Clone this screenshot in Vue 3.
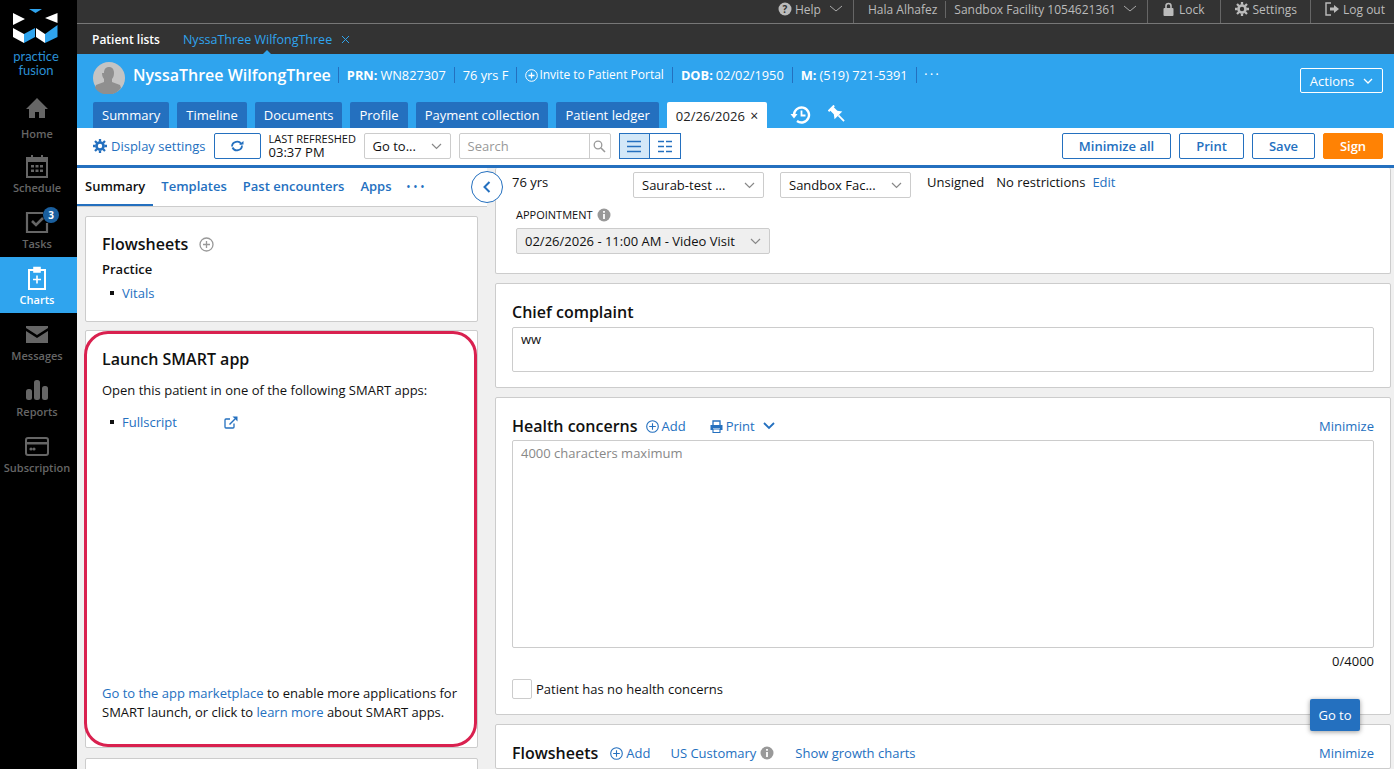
<template>
  <div class="app">
    <aside class="rail">
      <div class="logo">
        <svg width="46" height="35" viewBox="0 0 46 35">
          <path d="M16 0h13l-6.500 4z" fill="#2fa4ee" />
          <path d="M0 4l12 6-12 6zM32 9l12.500-5v10zM0 19l11 6v9L0 28zM23 19l9 6v9l-9-6z" fill="#fff" />
          <path d="M11 25l11-6v9l-11 6zM32 25l12.500-9v12L32 34z" fill="#2fa4ee" />
        </svg>
        <div class="logo-text">practice<br />fusion</div>
      </div>
      <a v-for="item in railItems" :key="item.label" class="rail-item" :class="{ active: item.active, first: item.label === 'Home' }">
        <svg class="rail-icon" viewBox="0 0 24 24" width="24" height="24" v-html="item.icon"></svg>
        <span v-if="item.badge" class="badge">{{ item.badge }}</span>
        <span>{{ item.label }}</span>
      </a>
    </aside>

    <div class="main">
      <div class="topbar">
        <div class="top-item help">
          <svg width="14" height="14" viewBox="0 0 14 14"><circle cx="7" cy="7" r="6.500" fill="#bbb" /><text x="7" y="10.500" text-anchor="middle" font-size="10" font-weight="700" fill="#333">?</text></svg>
          <span>Help</span>
          <svg class="chev" width="14" height="8" viewBox="0 0 14 8"><path d="M1 1l6 5 6-5" fill="none" stroke="#aaa" /></svg>
        </div>
        <div class="top-item user">
          <span class="user-name">Hala Alhafez</span>
          <span>Sandbox Facility 1054621361</span>
          <svg class="chev" width="14" height="8" viewBox="0 0 14 8"><path d="M1 1l6 5 6-5" fill="none" stroke="#aaa" /></svg>
        </div>
        <div class="top-item lock">
          <svg width="11" height="14" viewBox="0 0 11 14"><path d="M3 6V4a2.500 2.500 0 0 1 5 0v2" fill="none" stroke="#bbb" stroke-width="1.600" /><rect x="0.500" y="6" width="10" height="8" rx="1" fill="#bbb" /></svg>
          <span>Lock</span>
        </div>
        <div class="top-item settings">
          <svg width="14" height="14" viewBox="0 0 16 16"><circle cx="8" cy="8" r="4" fill="none" stroke="#bbb" stroke-width="3" /><path d="M8 0v3M8 13v3M0 8h3M13 8h3M2.300 2.300l2.200 2.200M11.500 11.500l2.200 2.200M2.300 13.700l2.200-2.200M11.500 4.500l2.200-2.200" stroke="#bbb" stroke-width="2.600" /></svg>
          <span>Settings</span>
        </div>
        <div class="top-item logout">
          <svg width="14" height="14" viewBox="0 0 14 14"><path d="M6 1H1v12h5" fill="none" stroke="#bbb" stroke-width="1.400" /><path d="M5 5.500h4V3l5 4-5 4V8.500H5z" fill="#bbb" /></svg>
          <span>Log out</span>
        </div>
      </div>

      <div class="tabsbar">
        <span class="lists">Patient lists</span>
        <span class="open-patient">NyssaThree WilfongThree</span>
        <svg class="tab-x" width="9" height="9" viewBox="0 0 9 9"><path d="M1 1l7 7M8 1L1 8" stroke="#2fa4ee" /></svg>
        <span class="notch"></span>
      </div>

      <header class="patient">
        <div class="patient-row">
          <svg class="avatar" width="32" height="32" viewBox="0 0 32 32">
            <circle cx="16" cy="16" r="16" fill="#c4c4c4" />
            <path d="M11 11c0-4 2-6 5-6s5 2 5 6c0 3-1 5-2 6v3l8 3 1 3a16 16 0 0 1-26 0l1-3 8-3v-3c-1-1-2-3-2-6z" fill="#8f8f8f" />
          </svg>
          <h1 class="patient-name">NyssaThree WilfongThree</h1>
          <div class="facts">
            <span class="fact"><b>PRN:</b> WN827307</span>
            <span class="fact">76 yrs F</span>
            <span class="fact invite">
              <svg width="13" height="13" viewBox="0 0 13 13"><circle cx="6.500" cy="6.500" r="5.800" fill="none" stroke="#fff" /><path d="M6.500 3.500v6M3.500 6.500h6" stroke="#fff" stroke-width="1.300" /></svg>
              Invite to Patient Portal
            </span>
            <span class="fact"><b>DOB:</b> 02/02/1950</span>
            <span class="fact"><b>M:</b> (519) 721-5391</span>
            <span class="fact dots">•••</span>
          </div>
          <button class="actions">
            Actions
            <svg width="10" height="6" viewBox="0 0 10 6"><path d="M1 1l4 4 4-4" fill="none" stroke="#fff" stroke-width="1.300" /></svg>
          </button>
        </div>
        <nav class="chart-tabs">
          <a v-for="t in chartTabs" :key="t" class="chart-tab">{{ t }}</a>
          <a class="chart-tab current">02/26/2026 <span class="close">×</span></a>
          <svg class="history" width="21" height="20" viewBox="0 0 21 20">
            <path d="M4 10a7.500 7.500 0 1 1 3 6" fill="none" stroke="#fff" stroke-width="2.400" />
            <path d="M0.500 9h7L4 13.500z" fill="#fff" />
            <path d="M11.500 5.500V10.500H15.500" fill="none" stroke="#fff" stroke-width="1.800" />
          </svg>
          <svg class="pin" width="18" height="18" viewBox="0 0 18 18">
            <g transform="rotate(-45 9 9)">
              <path d="M5 0h8v2h-1.500v5l3 4H3.500l3-4V2H5z" fill="#fff" />
              <path d="M9 11v8" stroke="#fff" stroke-width="1.800" />
            </g>
          </svg>
        </nav>
      </header>

      <div class="toolbar">
        <a class="display">
          <svg width="14" height="14" viewBox="0 0 16 16"><circle cx="8" cy="8" r="4" fill="none" stroke="#2470bf" stroke-width="3" /><path d="M8 0v3M8 13v3M0 8h3M13 8h3M2.300 2.300l2.200 2.200M11.500 11.500l2.200 2.200M2.300 13.700l2.200-2.200M11.500 4.500l2.200-2.200" stroke="#2470bf" stroke-width="2.600" /></svg>
          Display settings
        </a>
        <button class="refresh">
          <svg width="14" height="12" viewBox="0 0 14 12"><path d="M2 6.500A5 5 0 0 1 11.500 4.500M12 5.500A5 5 0 0 1 2.500 7.500" fill="none" stroke="#2470bf" stroke-width="1.800" /><path d="M9 4.500h4.500V1z" fill="#2470bf" /></svg>
        </button>
        <div class="refreshed"><span class="r1">LAST REFRESHED</span><span class="r2">03:37 PM</span></div>
        <div class="select goto">
          <span>Go to...</span>
          <svg width="11" height="7" viewBox="0 0 11 7"><path d="M1 1l4.500 4.500L10 1" fill="none" stroke="#888" stroke-width="1.200" /></svg>
        </div>
        <div class="search">
          <span class="search-ph">Search</span>
          <span class="search-btn">
            <svg width="13" height="13" viewBox="0 0 13 13"><circle cx="5" cy="5" r="3.800" fill="none" stroke="#999" stroke-width="1.300" /><path d="M8 8l4 4" stroke="#999" stroke-width="1.600" /></svg>
          </span>
        </div>
        <div class="viewtoggle">
          <span class="vt on"><svg width="14" height="13" viewBox="0 0 14 13"><path d="M0 1.500h14M0 6.500h14M0 11.500h14" stroke="#2470bf" stroke-width="1.600" /></svg></span>
          <span class="vt"><svg width="14" height="13" viewBox="0 0 14 13"><path d="M0 1.500h6M8 1.500h6M0 6.500h6M8 6.500h6M0 11.500h6M8 11.500h6" stroke="#2470bf" stroke-width="1.600" /></svg></span>
        </div>
        <div class="tool-right">
          <button class="tbtn w-min">Minimize all</button>
          <button class="tbtn w-print">Print</button>
          <button class="tbtn w-save">Save</button>
          <button class="tbtn sign">Sign</button>
        </div>
      </div>

      <div class="body">
        <section class="left">
          <nav class="subtabs">
            <a class="subtab selected">Summary</a>
            <a class="subtab">Templates</a>
            <a class="subtab">Past encounters</a>
            <a class="subtab">Apps</a>
            <a class="subtab more">•••</a>
          </nav>
          <div class="left-scroll">
            <div class="card flow-card">
              <h2 class="card-title">Flowsheets
                <svg width="15" height="15" viewBox="0 0 15 15"><circle cx="7.500" cy="7.500" r="6.500" fill="none" stroke="#999" stroke-width="1.300" /><path d="M7.500 4v7M4 7.500h7" stroke="#999" stroke-width="1.300" /></svg>
              </h2>
              <div class="practice">Practice</div>
              <ul class="links"><li><a>Vitals</a></li></ul>
            </div>
            <div class="card smart-card">
              <h2 class="card-title">Launch SMART app</h2>
              <p class="smart-line">Open this patient in one of the following SMART apps:</p>
              <ul class="links smart-links">
                <li>
                  <a>Fullscript</a>
                  <svg class="ext" width="14" height="13" viewBox="0 0 14 13"><path d="M10 7.500V11a1 1 0 0 1-1 1H2a1 1 0 0 1-1-1V4a1 1 0 0 1 1-1h4" fill="none" stroke="#2470bf" stroke-width="1.300" /><path d="M5.500 8.500L11 3" stroke="#2470bf" stroke-width="1.500" /><path d="M8.500 0.500H13.500V5.500z" fill="#2470bf" /></svg>
                </li>
              </ul>
              <p class="smart-foot"><a>Go to the app marketplace</a> to enable more applications for SMART launch, or click to <a>learn more</a> about SMART apps.</p>
            </div>
            <div class="card stub"></div>
          </div>
        </section>

        <button class="collapse">
          <svg width="8" height="12" viewBox="0 0 8 12"><path d="M6.500 1L1.500 6l5 5" fill="none" stroke="#2470bf" stroke-width="2" /></svg>
        </button>

        <section class="right">
          <div class="card enc-card">
            <div class="enc-row">
              <span class="enc-age">76 yrs</span>
              <div class="select prov"><span>Saurab-test ...</span><svg width="11" height="7" viewBox="0 0 11 7"><path d="M1 1l4.500 4.500L10 1" fill="none" stroke="#888" stroke-width="1.200" /></svg></div>
              <div class="select fac"><span>Sandbox Fac...</span><svg width="11" height="7" viewBox="0 0 11 7"><path d="M1 1l4.500 4.500L10 1" fill="none" stroke="#888" stroke-width="1.200" /></svg></div>
              <span class="unsigned">Unsigned</span>
              <span class="restrict">No restrictions</span>
              <a class="edit">Edit</a>
            </div>
            <div class="appt-label">APPOINTMENT
              <svg width="14" height="14" viewBox="0 0 14 14"><circle cx="7" cy="7" r="6.500" fill="#999" /><path d="M7 6v5M7 3v1.800" stroke="#fff" stroke-width="1.800" /></svg>
            </div>
            <div class="select appt"><span>02/26/2026 - 11:00 AM - Video Visit</span><svg width="11" height="7" viewBox="0 0 11 7"><path d="M1 1l4.500 4.500L10 1" fill="none" stroke="#888" stroke-width="1.200" /></svg></div>
          </div>

          <div class="card chief">
            <h2 class="sec-title">Chief complaint</h2>
            <div class="chief-box">ww</div>
          </div>

          <div class="card health">
            <div class="sec-head">
              <h2 class="sec-title">Health concerns</h2>
              <a class="add">
                <svg width="13" height="13" viewBox="0 0 13 13"><circle cx="6.500" cy="6.500" r="5.800" fill="none" stroke="#2470bf" stroke-width="1.100" /><path d="M6.500 3.200v6.600M3.200 6.500h6.600" stroke="#2470bf" stroke-width="1.100" /></svg>
                Add
              </a>
              <a class="print">
                <svg width="13" height="13" viewBox="0 0 13 13"><path d="M3 5V1h7v4" fill="none" stroke="#2470bf" stroke-width="1.300" /><path d="M0.500 5h12v5H10V8H3v2H0.500z" fill="#2470bf" /><path d="M3 9h7v3.500H3z" fill="none" stroke="#2470bf" stroke-width="1.100" /></svg>
                Print
                <svg class="print-chev" width="12" height="8" viewBox="0 0 12 8"><path d="M1 1l5 5 5-5" fill="none" stroke="#2470bf" stroke-width="1.800" /></svg>
              </a>
              <a class="minimize">Minimize</a>
            </div>
            <div class="health-box">4000 characters maximum</div>
            <div class="count">0/4000</div>
            <label class="check"><span class="box"></span>Patient has no health concerns</label>
          </div>

          <div class="card flow2">
            <div class="sec-head">
              <h2 class="sec-title">Flowsheets</h2>
              <a class="add flow-add">
                <svg width="13" height="13" viewBox="0 0 13 13"><circle cx="6.500" cy="6.500" r="5.800" fill="none" stroke="#2470bf" stroke-width="1.100" /><path d="M6.500 3.200v6.600M3.200 6.500h6.600" stroke="#2470bf" stroke-width="1.100" /></svg>
                Add
              </a>
              <a class="units">US Customary
                <svg width="14" height="14" viewBox="0 0 14 14"><circle cx="7" cy="7" r="6.500" fill="#999" /><path d="M7 6v5M7 3v1.800" stroke="#fff" stroke-width="1.800" /></svg>
              </a>
              <a class="growth">Show growth charts</a>
              <a class="minimize">Minimize</a>
            </div>
          </div>
        </section>
      </div>

      <button class="goto-float">Go to</button>
    </div>
  </div>
</template>

<script setup>
const railItems = [
  { label: 'Home', icon: '<path d="M12 1L1 12h3v9h6v-6h4v6h6v-9h3z" fill="#666"/>' },
  { label: 'Schedule', icon: '<path d="M2 4h20v19H2z" fill="none" stroke="#666" stroke-width="2"/><path d="M2 4h20v4H2zM6 1h2v5H6zM16 1h2v5h-2zM6 11h3v2.500H6zM10.500 11h3v2.500h-3zM15 11h3v2.500h-3zM6 15.500h3V18H6zM10.500 15.500h3V18h-3zM15 15.500h3V18h-3z" fill="#666"/>' },
  { label: 'Tasks', badge: 3, icon: '<path d="M22 13v9H2V3h16" fill="none" stroke="#666" stroke-width="2.200"/><path d="M7 11l4 4 7-7" fill="none" stroke="#666" stroke-width="2.600"/>' },
  { label: 'Charts', active: true, icon: '<path d="M4 4h16v19H4z" fill="none" stroke="#fff" stroke-width="2"/><path d="M9 1.500h6V6H9zM12 9.500v8M8 13.500h8" fill="#fff" stroke="#fff" stroke-width="1.600"/>' },
  { label: 'Messages', icon: '<path d="M1 4h22v2L12 13 1 6zM1 9l11 7 11-7v12H1z" fill="#666"/>' },
  { label: 'Reports', icon: '<rect x="1" y="11" width="6" height="11" rx="2.500" fill="#666"/><rect x="9" y="2" width="6" height="20" rx="2.500" fill="#666"/><rect x="17" y="8" width="6" height="14" rx="2.500" fill="#666"/>' },
  { label: 'Subscription', icon: '<rect x="1" y="4" width="22" height="17" rx="2" fill="none" stroke="#666" stroke-width="2"/><path d="M1 8h22v2.500H1z" fill="#666"/><circle cx="6" cy="15" r="1.600" fill="#666"/><circle cx="9" cy="15" r="1.600" fill="#666"/>' }
]

const chartTabs = ['Summary', 'Timeline', 'Documents', 'Profile', 'Payment collection', 'Patient ledger']
</script>

<style>
html, body { margin: 0; height: 100%; overflow: hidden; }
</style>

<style scoped>
.app {
  display: flex;
  height: 769px;
  overflow: hidden;
  font-family: "Open Sans", "Liberation Sans", sans-serif;
  font-size: 13px;
  color: #111;
  background: #f0f0f0;
}
a { color: #2470bf; text-decoration: none; }
button { font-family: inherit; cursor: pointer; }
h1, h2, p, ul { margin: 0; padding: 0; }

.rail {
  width: 77px;
  flex: none;
  background: #000;
  display: flex;
  flex-direction: column;
}
.logo {
  height: 91px;
  padding: 9px 0 0 13px;
  box-sizing: border-box;
  display: flex;
  flex-direction: column;
  width: 59px;
}
.logo svg { display: block; }
.logo-text {
  color: #2a8fd4;
  font-family: Lato, "Open Sans", sans-serif;
  font-size: 13px;
  line-height: 13.500px;
  text-align: center;
  margin-top: 6px;
}
.rail-item {
  position: relative;
  height: 56px;
  box-sizing: border-box;
  padding: 9px 3px 0 0;
  display: flex;
  flex-direction: column;
  align-items: center;
  color: #666;
  font-size: 11px;
  font-weight: 600;
  line-height: 15px;
  gap: 2px;
}
.rail-item.first { height: 54px; padding-top: 6px; gap: 5px; }
.rail-item.active { background: #2fa4ee; color: #fff; }
.rail-icon { flex: none; }
.badge {
  position: absolute;
  top: 6px;
  left: 43px;
  width: 16px;
  height: 16px;
  border-radius: 50%;
  background: #1a5f9e;
  color: #fff;
  font-size: 10px;
  font-weight: 700;
  line-height: 16px;
  text-align: center;
}

.main { position: relative; flex: 1; min-width: 0; display: flex; flex-direction: column; }

.topbar {
  height: 24px;
  box-sizing: border-box;
  background: #333;
  border-bottom: 1px solid #777;
  display: flex;
  justify-content: flex-end;
  color: #bbb;
  font-size: 12px;
}
.top-item {
  display: flex;
  align-items: center;
  gap: 3px;
  padding: 0 9px 5px;
  border-left: 1px solid #666;
}
.help { border-left: 0; padding-right: 10px; }
.help .chev { margin-left: 5px; }
.user { padding-left: 14px; padding-right: 10px; gap: 8px; }
.user-name { padding-right: 8px; border-right: 1px solid #666; }
.user .chev { margin-left: -1px; }
.lock { padding-left: 15px; padding-right: 15px; gap: 5px; }
.settings { padding-left: 14px; padding-right: 13px; gap: 4px; }
.logout { padding-left: 14px; padding-right: 9px; gap: 4px; }

.tabsbar {
  position: relative;
  height: 30px;
  background: #333;
  display: flex;
  align-items: center;
  padding-left: 15px;
  font-size: 12px;
}
.lists { color: #fff; font-weight: 600; }
.open-patient { color: #2fa4ee; margin-left: 23px; font-size: 12.500px; }
.tab-x { margin-left: 9px; }
.notch {
  position: absolute;
  left: 186px;
  bottom: 0;
  border: 4px solid transparent;
  border-top: 0;
  border-bottom-color: #2fa4ee;
}

.patient { height: 74px; background: #2fa4ee; color: #fff; padding: 8px 11px 0 16px; box-sizing: border-box; }
.patient-row { display: flex; align-items: flex-start; height: 32px; }
.avatar { flex: none; }
.patient-name { font-size: 16px; font-weight: 600; line-height: 22px; margin: 2px 0 0 8px; white-space: nowrap; }
.facts { display: flex; align-items: center; margin: 5px 0 0 7px; font-size: 12.800px; }
.fact { padding: 0 8px; border-left: 1px solid #2470bf; line-height: 16px; display: flex; gap: 3px; align-items: center; white-space: nowrap; }
.fact b { font-weight: 700; }
.invite { font-size: 12px; gap: 1px; }
.dots { font-size: 7px; letter-spacing: 3px; }
.actions {
  margin: 6px 0 0 auto;
  width: 83px;
  height: 25px;
  background: transparent;
  border: 1px solid #fff;
  border-radius: 2px;
  color: #fff;
  font-size: 13px;
  display: flex;
  align-items: center;
  justify-content: center;
  gap: 9px;
}
.chart-tabs { display: flex; align-items: center; gap: 8px; margin-top: 8px; height: 26px; }
.chart-tab {
  height: 26px;
  line-height: 27px;
  background: #2470bf;
  color: #fff;
  padding: 0 9px;
  border-radius: 2px 2px 0 0;
  white-space: nowrap;
}
.chart-tab.current { background: #fff; color: #222; }
.close { margin-left: 2px; font-size: 14px; }
.history { margin-left: 15px; }
.pin { margin-left: 9px; margin-top: -3px; }

.toolbar {
  height: 40px;
  box-sizing: border-box;
  background: #fff;
  border-bottom: 3px solid #2470bf;
  display: flex;
  align-items: center;
  padding: 0 11px 1px 16px;
}
.display { display: flex; align-items: center; gap: 4px; }
.refresh {
  width: 47px;
  height: 26px;
  margin-left: 8px;
  background: #fff;
  border: 1px solid #2470bf;
  border-radius: 2px;
  display: flex;
  align-items: center;
  justify-content: center;
}
.refreshed { display: flex; flex-direction: column; width: 88px; margin-left: 7px; padding-left: 1px; box-sizing: border-box; white-space: nowrap; }
.r1 { font-size: 11px; line-height: 12px; }
.r2 { font-size: 13px; line-height: 14px; }
.select {
  display: flex;
  align-items: center;
  justify-content: space-between;
  box-sizing: border-box;
  height: 26px;
  background: #fff;
  border: 1px solid #ccc;
  border-radius: 2px;
  padding: 0 8px;
  white-space: nowrap;
}
.goto { width: 87px; margin-left: 8px; }
.search {
  display: flex;
  box-sizing: border-box;
  width: 152px;
  height: 26px;
  margin-left: 8px;
  border: 1px solid #ccc;
  border-radius: 2px;
}
.search-ph { flex: 1; color: #999; padding-left: 8px; line-height: 24px; }
.search-btn { width: 20px; border-left: 1px solid #ccc; display: flex; align-items: center; justify-content: center; }
.viewtoggle { display: flex; margin-left: 8px; border: 1px solid #2470bf; height: 26px; box-sizing: border-box; }
.vt { width: 30px; box-sizing: border-box; display: flex; align-items: center; justify-content: center; }
.vt.on { background: #d3e8f8; border-right: 1px solid #2470bf; }
.tool-right { margin-left: auto; display: flex; gap: 8px; }
.tbtn {
  height: 26px;
  background: #fff;
  border: 1px solid #2470bf;
  border-radius: 2px;
  color: #2470bf;
  font-size: 13px;
  font-weight: 600;
  padding: 0;
}
.w-min { width: 109px; }
.w-print { width: 65px; }
.w-save { width: 63px; }
.sign { width: 60px; background: #ff8204; border-color: #ff8204; color: #fff; }

.body { position: relative; flex: 1; min-height: 0; display: flex; overflow: hidden; }
.left { width: 410px; flex: none; display: flex; flex-direction: column; }
.subtabs {
  height: 39px;
  box-sizing: border-box;
  background: #fff;
  border-bottom: 1px solid #ccc;
  display: flex;
  align-items: center;
  gap: 16px;
  font-weight: 600;
}
.subtab { height: 38px; line-height: 36px; box-sizing: border-box; white-space: nowrap; }
.subtab.selected { color: #111; padding: 0 8px; border-bottom: 2px solid #2470bf; margin-right: -8px; }
.subtab.more { font-size: 10px; letter-spacing: 3.200px; margin-left: -1px; }
.left-scroll { padding: 9px 0 0 8px; display: flex; flex-direction: column; gap: 8px; }
.card { background: #fff; border: 1px solid #ccc; border-radius: 2px; box-sizing: border-box; }
.flow-card { width: 393px; height: 106px; padding: 15px 16px 0; flex: none; }
.card-title { font-size: 16px; font-weight: 600; line-height: 24px; display: flex; align-items: center; gap: 11px; }
.practice { font-weight: 600; margin-top: 4px; line-height: 18px; }
.links { list-style: none; margin-top: 6px; }
.links li { display: flex; align-items: center; line-height: 18px; padding-left: 20px; position: relative; }
.links li::before { content: ""; position: absolute; left: 8px; top: 7px; width: 4px; height: 4px; background: #111; }
.smart-card {
  width: 393px;
  height: 418px;
  padding: 16px 16px 0;
  position: relative;
  display: flex;
  flex-direction: column;
  flex: none;
}
/* red highlight drawn over the card */
.smart-card::after {
  content: "";
  position: absolute;
  left: -2px;
  right: 0;
  top: 0;
  bottom: 0;
  border: 3px solid #d9214f;
  border-radius: 24px;
  pointer-events: none;
}
.smart-line { margin-top: 10px; line-height: 18px; }
.smart-links { margin-top: 14px; }
.ext { margin-left: 47px; }
.smart-foot { margin-top: auto; margin-bottom: 25px; line-height: 19px; }
.stub { width: 393px; height: 60px; flex: none; margin-top: 2px; }

.collapse {
  position: absolute;
  left: 394px;
  top: 3px;
  width: 32px;
  height: 32px;
  padding: 0;
  background: #fff;
  border: 1px solid #2470bf;
  border-radius: 50%;
  display: flex;
  align-items: center;
  justify-content: center;
  z-index: 2;
}

.right { flex: 1; min-width: 0; padding: 0 3px 0 8px; display: flex; flex-direction: column; gap: 9px; }
.enc-card { height: 106px; flex: none; padding: 2px 16px 0; border-top: 0; }
.enc-row { display: flex; align-items: flex-start; }
.enc-age { line-height: 20px; width: 121px; margin-top: 2px; }
.prov { width: 131px; margin-top: 2px; }
.fac { width: 131px; margin: 2px 0 0 16px; }
.unsigned { margin: 2px 0 0 16px; line-height: 20px; }
.restrict { margin: 2px 0 0 12px; line-height: 20px; }
.edit { margin: 2px 0 0 7px; line-height: 20px; }
.appt-label { display: flex; align-items: center; gap: 4px; font-size: 11px; line-height: 16px; margin: 9px 0 0 4px; }
.appt { width: 254px; margin: 5px 0 0 4px; background: #efefef; }
.chief { height: 105px; flex: none; padding: 17px 16px 0; }
.sec-title { font-size: 16px; font-weight: 600; line-height: 22px; white-space: nowrap; }
.chief-box { height: 45px; box-sizing: border-box; border: 1px solid #ccc; border-radius: 2px; padding: 2px 8px; margin-top: 4px; }
.health { height: 318px; flex: none; padding: 17px 16px 0; }
.sec-head { display: flex; align-items: center; height: 22px; white-space: nowrap; }
.add { display: flex; align-items: center; gap: 3px; margin-left: 8px; }
.flow-add { margin-left: 12px; }
.print { display: flex; align-items: center; gap: 3px; margin-left: 24px; }
.print-chev { margin-left: 5px; }
.minimize { margin-left: auto; }
.health-box { height: 208px; box-sizing: border-box; border: 1px solid #ccc; border-radius: 2px; padding: 3px 8px; color: #888; margin-top: 3px; }
.count { text-align: right; line-height: 18px; margin-top: 4px; }
.check { display: flex; align-items: center; gap: 4px; margin-top: 9px; }
.box { width: 20px; height: 20px; box-sizing: border-box; border: 1px solid #ccc; border-radius: 2px; }
.flow2 { flex: 1; padding: 17px 16px 0; }
.units { display: flex; align-items: center; gap: 4px; margin-left: 20px; }
.growth { margin-left: 21px; }

.goto-float {
  position: absolute;
  left: 1233px;
  top: 699px;
  width: 50px;
  height: 32px;
  background: #2470bf;
  border: 0;
  border-radius: 2px;
  color: #fff;
  font-size: 13px;
  box-shadow: 0 1px 5px rgba(0, 0, 0, .4);
  padding: 0;
}
</style>
